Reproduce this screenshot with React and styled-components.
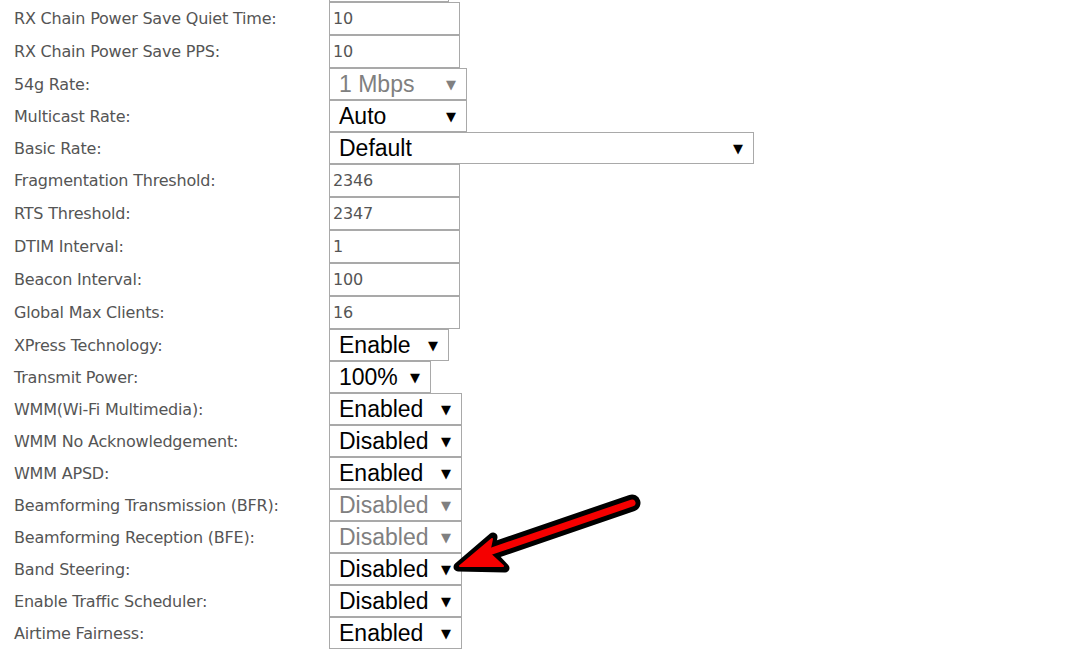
import styled, { createGlobalStyle } from "styled-components";

const GlobalStyle = createGlobalStyle`
    html, body {
        margin: 0;
        padding: 0;
        background: #ffffff;
    }
`;

const rows = [
    { label: "", type: "select", value: "", width: 120 },
    { label: "RX Chain Power Save Quiet Time:", type: "input", value: "10" },
    { label: "RX Chain Power Save PPS:", type: "input", value: "10" },
    { label: "54g Rate:", type: "select", value: "1 Mbps", width: 138, disabled: true },
    { label: "Multicast Rate:", type: "select", value: "Auto", width: 138 },
    { label: "Basic Rate:", type: "select", value: "Default", width: 425 },
    { label: "Fragmentation Threshold:", type: "input", value: "2346" },
    { label: "RTS Threshold:", type: "input", value: "2347" },
    { label: "DTIM Interval:", type: "input", value: "1" },
    { label: "Beacon Interval:", type: "input", value: "100" },
    { label: "Global Max Clients:", type: "input", value: "16" },
    { label: "XPress Technology:", type: "select", value: "Enable", width: 120 },
    { label: "Transmit Power:", type: "select", value: "100%", width: 102 },
    { label: "WMM(Wi-Fi Multimedia):", type: "select", value: "Enabled", width: 133 },
    { label: "WMM No Acknowledgement:", type: "select", value: "Disabled", width: 133 },
    { label: "WMM APSD:", type: "select", value: "Enabled", width: 133 },
    { label: "Beamforming Transmission (BFR):", type: "select", value: "Disabled", width: 133, disabled: true },
    { label: "Beamforming Reception (BFE):", type: "select", value: "Disabled", width: 133, disabled: true },
    { label: "Band Steering:", type: "select", value: "Disabled", width: 133 },
    { label: "Enable Traffic Scheduler:", type: "select", value: "Disabled", width: 133 },
    { label: "Airtime Fairness:", type: "select", value: "Enabled", width: 133 },
];

const App = () => {
    return (
        <Page>
            <GlobalStyle />
            <Table>
                {rows.map((row, i) => (
                    <Row key={i} kind={row.type}>
                        <Label>{row.label}</Label>
                        {row.type === "input" ? (
                            <TextBox>{row.value}</TextBox>
                        ) : (
                            <Select width={row.width} disabled={row.disabled}>
                                <span>{row.value}</span>
                                {row.value && <Caret>▼</Caret>}
                            </Select>
                        )}
                    </Row>
                ))}
            </Table>

            <Pointer viewBox="0 0 1085 658">
                <path
                    d="M632 503 L486 553"
                    stroke="#000"
                    strokeWidth="17"
                    strokeLinecap="round"
                    fill="none"
                />
                <path
                    d="M458 567 L493 537 L490 552 L505 568 Z"
                    stroke="#000"
                    strokeWidth="9"
                    strokeLinejoin="round"
                    fill="#000"
                />
                <path
                    d="M632 503 L486 553"
                    stroke="#f50000"
                    strokeWidth="7"
                    strokeLinecap="round"
                    fill="none"
                />
                <path
                    d="M460 566 L492 539 L489 553 L503 566 Z"
                    stroke="#f50000"
                    strokeWidth="2"
                    strokeLinejoin="round"
                    fill="#f50000"
                />
            </Pointer>
        </Page>
    );
};

export default App;

const Page = styled.div`
    position: relative;
    width: 1085px;
    height: 658px;
    overflow: hidden;
`;

const Table = styled.div`
    display: flex;
    flex-direction: column;
    margin-top: -30px;
    padding-left: 14px;
`;

const Row = styled.div`
    display: grid;
    grid-template-columns: 315px auto;
    align-items: stretch;
    height: ${props => props.kind === "input" ? "33px" : "32px"};
`;

const Label = styled.div`
    display: flex;
    align-items: center;
    font-family: "DejaVu Sans", Verdana, sans-serif;
    font-size: 16px;
    letter-spacing: -0.2px;
    color: #555555;
    white-space: nowrap;
`;

const TextBox = styled.div`
    box-sizing: border-box;
    width: 131px;
    height: 33px;
    border: 1px solid #a9a9a9;
    display: flex;
    align-items: center;
    padding-left: 3px;
    font-family: "DejaVu Sans", Verdana, sans-serif;
    font-size: 16px;
    letter-spacing: -0.2px;
    color: #555555;
`;

const Select = styled.div`
    box-sizing: border-box;
    width: ${props => props.width}px;
    height: 32px;
    border: 1px solid #a9a9a9;
    display: flex;
    align-items: center;
    justify-content: space-between;
    padding: 0 10px 0 9px;
    font-family: "Liberation Sans", Arial, sans-serif;
    font-size: 23px;
    color: ${props => props.disabled ? "#808080" : "#000000"};
`;

const Caret = styled.span`
    font-family: "DejaVu Sans", sans-serif;
    font-size: 13px;
    line-height: 1;
`;

const Pointer = styled.svg`
    position: absolute;
    left: 0;
    top: 0;
    width: 1085px;
    height: 658px;
    pointer-events: none;
`;
